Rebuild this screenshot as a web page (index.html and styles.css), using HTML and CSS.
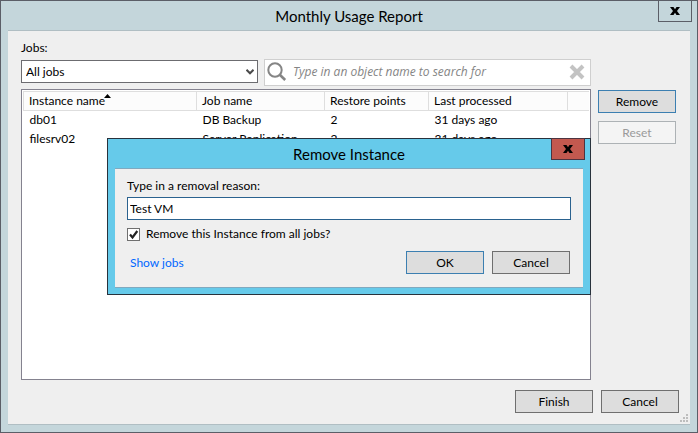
FILE: index.html
```
<!DOCTYPE html>
<html lang="en">
<head>
<meta charset="utf-8">
<title>Monthly Usage Report</title>
<link rel="stylesheet" href="styles.css">
</head>
<body>
<main class="window">
  <header class="titlebar">
    <h1 class="title">Monthly Usage Report</h1>
    <button class="close" type="button" aria-label="Close">
      <svg width="10" height="8" viewBox="0 0 10 8"><path d="M0 0h3.5L5 2.2 6.5 0H10L7 4l3 4H6.500L5 5.800 3.500 8H0l3-4z"/></svg>
    </button>
  </header>
  <div class="panel">
    <div class="body">
      <div class="content">
        <label class="label" for="jobs">Jobs:</label>
        <div class="filters">
          <div class="picker">
            <select class="select" id="jobs"><option>All jobs</option></select>
            <svg class="chevron" width="8" height="6" viewBox="0 0 8 6"><path d="M0.500 0.800L4 4.300 7.500 0.800" fill="none" stroke="#4a4a4a" stroke-width="2"/></svg>
          </div>
          <div class="search">
            <svg width="20" height="20" viewBox="0 0 20 20" fill="none" stroke="#858585"><circle cx="8" cy="8" r="6.700" stroke-width="2"/><path d="M12.800 12.800L18.200 18" stroke-width="2.600"/></svg>
            <input class="search-input" type="text" aria-label="Search" placeholder="Type in an object name to search for">
            <button class="clear" type="button" aria-label="Clear search">
              <svg width="16" height="16" viewBox="0 0 16 16"><path d="M2 2l12 12M14 2L2 14" stroke="#c3c3c3" stroke-width="4"/></svg>
            </button>
          </div>
        </div>
        <div class="list">
          <table class="table">
            <colgroup><col class="col-instance"><col class="col-job"><col class="col-points"><col class="col-last"><col></colgroup>
            <thead>
              <tr>
                <th>Instance name<svg class="sort" width="7" height="4" viewBox="0 0 7 4"><path d="M3.500 0L7 4H0z"/></svg></th>
                <th>Job name</th><th>Restore points</th><th>Last processed</th><th></th>
              </tr>
            </thead>
            <tbody>
              <tr><td>db01</td><td>DB Backup</td><td>2</td><td>31 days ago</td><td></td></tr>
              <tr><td>filesrv02</td><td>Server Replication</td><td>2</td><td>31 days ago</td><td></td></tr>
            </tbody>
          </table>
        </div>
      </div>
      <div class="side">
        <button class="button primary" type="button">Remove</button>
        <button class="button" type="button" disabled>Reset</button>
      </div>
    </div>
    <footer class="footer">
      <button class="button" type="button">Finish</button>
      <button class="button" type="button">Cancel</button>
    </footer>
    <svg class="grip" width="8" height="8" viewBox="0 0 8 8" fill="#bdbdbd"><path d="M6 0h2v2H6zM3 3h2v2H3zM6 3h2v2H6zM0 6h2v2H0zM3 6h2v2H3zM6 6h2v2H6z"/></svg>
  </div>

  <section class="dialog" role="dialog" aria-labelledby="dialog-title">
    <header class="titlebar">
      <h2 class="title" id="dialog-title">Remove Instance</h2>
      <button class="close danger" type="button" aria-label="Close">
        <svg width="10" height="8" viewBox="0 0 10 8"><path d="M0 0h3.500L5 2.200 6.500 0H10L7 4l3 4H6.500L5 5.800 3.500 8H0l3-4z"/></svg>
      </button>
    </header>
    <form class="form">
      <label class="label" for="reason">Type in a removal reason:</label>
      <input class="reason" id="reason" type="text" value="Test VM">
      <label class="check">
        <input class="checkbox" type="checkbox" checked>
        <svg class="tick" width="13" height="13" viewBox="0 0 13 13"><path d="M3 6.500L5.500 9.500 10.300 3" fill="none" stroke="#222" stroke-width="2.200"/></svg>
        Remove this Instance from all jobs?
      </label>
      <div class="actions">
        <a class="link" href="#jobs">Show jobs</a>
        <button class="button primary" type="button">OK</button>
        <button class="button" type="button">Cancel</button>
      </div>
    </form>
  </section>
</main>
</body>
</html>
```
FILE: styles.css
```
* { box-sizing: border-box; }

body {
  margin: 0;
  font: 12px/16px Lato, "Open Sans", sans-serif;
  color: #000;
}

button, input, select { font: inherit; color: inherit; margin: 0; }
svg { display: block; flex: none; }

.window {
  position: relative;
  display: flex;
  flex-direction: column;
  min-height: 100vh;
  padding: 0 7px 7px;
  border: 1px solid #5b5e67;
  background: #c4d6db;
}

.titlebar {
  position: relative;
  display: flex;
  justify-content: center;
  height: 29px;
  padding-top: 4px;
}

.title { margin: 0; font-size: 15px; line-height: 22px; font-weight: 400; }

.close {
  position: absolute;
  top: -1px;
  right: -2px;
  display: grid;
  place-items: center;
  width: 34px;
  height: 22px;
  padding: 0;
  border: 1px solid #5b5e67;
  background: transparent;
}

.danger { border-color: #4d3440; background: #c2594f; }

.panel {
  position: relative;
  flex: 1;
  display: flex;
  flex-direction: column;
  padding: 9px 11px 11px 13px;
  border: solid #b0bec3;
  border-width: 1px 0;
  background: #efefef;
}

.body { flex: 1; display: flex; gap: 7px; }
.content { flex: 1; display: flex; flex-direction: column; }
.label { display: block; }
.filters { display: flex; gap: 6px; margin-top: 3px; }

.picker { position: relative; width: 237px; height: 23px; margin-top: 1px; }

.select {
  appearance: none;
  width: 100%;
  height: 23px;
  padding: 0 20px 0 4px;
  border: 1px solid #6c6c70;
  border-radius: 0;
  background: #fff;
}

.chevron { position: absolute; right: 4px; top: 9px; pointer-events: none; }

.search {
  flex: 1;
  display: flex;
  align-items: center;
  height: 27px;
  padding: 0 5px 2px 2px;
  border: 1px solid #cfcfcf;
  background: #fff;
}

.search-input {
  flex: 1;
  min-width: 0;
  padding: 0 6px;
  border: 0;
  outline: 0;
  background: transparent;
  font-family: "Open Sans", sans-serif;
  font-style: italic;
}

.search-input::placeholder { color: #858585; opacity: 1; }
.clear { padding: 0; border: 0; background: transparent; }

.list { flex: 1; margin-top: 3px; padding: 1px; border: 1px solid #84828f; background: #fff; }

.table { width: 100%; table-layout: fixed; border-collapse: collapse; }
.table th, .table td { height: 19px; padding: 0 0 0 5px; text-align: left; font-weight: 400; white-space: nowrap; }
.table td { padding-left: 6px; }
.table th { position: relative; border: 1px solid #dedede; background: #fcfcfc; }
.table th:last-child { border-right: 0; }
.sort { position: absolute; left: 80px; top: 2px; }
.col-instance { width: 173px; }
.col-job { width: 128px; }
.col-points { width: 104px; }
.col-last { width: 139px; }

.side { display: flex; flex-direction: column; gap: 8px; margin: 50px 3px 0 0; }

.button {
  width: 78px;
  height: 23px;
  padding: 0;
  border: 1px solid #6f6f6f;
  border-radius: 0;
  background: #ddd;
  text-align: center;
}

.primary { border-color: #3c7fb1; }
.button:disabled { border-color: #adb2b5; background: #f4f4f4; color: #9a9a9a; }
.footer { display: flex; justify-content: flex-end; gap: 8px; margin-top: 10px; }
.grip { position: absolute; right: 2px; bottom: 2px; }

.dialog {
  position: absolute;
  top: 137px;
  left: 106px;
  right: 106px;
  padding: 0 7px 6px;
  border: 1px solid #28323c;
  background: #66caea;
}

.form { padding: 9px 12px 13px 12px; border: solid #80a9bf; border-width: 1px 0; background: #efefef; }

.reason {
  display: block;
  width: 100%;
  height: 23px;
  margin-top: 3px;
  padding: 0 2px;
  border: 1px solid #2a628f;
  outline: 0;
  background: #fff;
}

.check { position: relative; display: flex; align-items: center; gap: 6px; margin-top: 6px; }
.checkbox { appearance: none; width: 13px; height: 13px; border: 1px solid #6f6f6f; background: #fff; }
.tick { position: absolute; left: 0; }
.actions { display: flex; align-items: center; gap: 8px; margin-top: 9px; padding: 0 1px 0 3px; }
.link { flex: 1; color: #06f; text-decoration: none; }
```
